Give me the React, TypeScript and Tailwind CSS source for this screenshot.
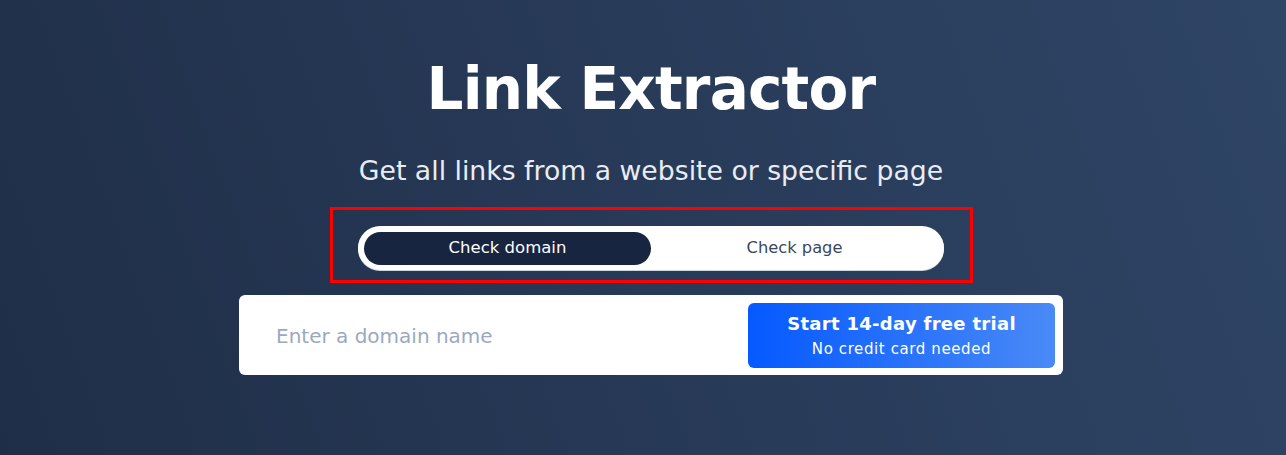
import React from "react";

export default function App() {
  const font = { fontFamily: '"DejaVu Sans", "Liberation Sans", sans-serif' };
  return (
    <div
      className="w-full min-h-[455px] bg-[linear-gradient(70deg,#1f2e48_0%,#283b59_55%,#2f4566_100%)] flex flex-col items-center pl-[16px] pt-[60px]"
      style={font}
    >
      <h1 className="text-[58px] leading-[58px] font-bold text-white tracking-[-0.8px]">
        Link Extractor
      </h1>
      <p className="mt-[37px] text-[26.7px] leading-[32px] text-[#e9edf3]">
        Get all links from a website or specific page
      </p>
      <div className="mt-[20px] w-[643px] h-[76px] border-[3px] border-[#ff0000] flex justify-center pt-[16px]">
        <div className="w-[586px] h-[44px] rounded-full bg-white p-[6px] pb-[5px] flex shadow-[0_1px_0_#cdd4df]">
          <button className="flex-1 h-full rounded-full bg-[#172540] text-white text-[16.5px] flex items-center justify-center">
            Check domain
          </button>
          <button className="flex-1 h-full rounded-full text-[#3b485c] text-[16.3px] flex items-center justify-center">
            Check page
          </button>
        </div>
      </div>
      <div className="mt-[12px] w-[824px] h-[80px] bg-white rounded-[6px] p-[8px] pb-[7px] flex">
        <div className="flex-1 flex items-center pl-[29px]">
          <input
            className="w-full outline-none text-[20px] text-[#334155] placeholder:text-[#9aa9bf] bg-transparent"
            placeholder="Enter a domain name"
            style={font}
          />
        </div>
        <button className="w-[307px] h-full rounded-[6px] bg-[linear-gradient(90deg,#0559ff_0%,#4a8af7_100%)] flex flex-col items-center justify-center gap-[5px] text-white">
          <span className="text-[18px] leading-[22px] font-bold tracking-[0.3px]">
            Start 14-day free trial
          </span>
          <span className="text-[15px] leading-[18px] tracking-[0.6px]">
            No credit card needed
          </span>
        </button>
      </div>
    </div>
  );
}
